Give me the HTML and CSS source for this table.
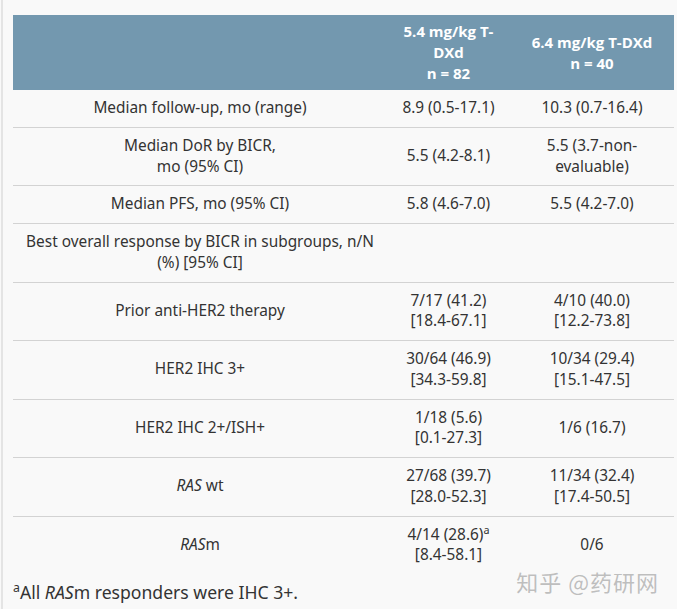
FILE: index.html
```html
<!DOCTYPE html>
<html>
<head>
<meta charset="utf-8">
<link rel="stylesheet" href="styles.css">
</head>
<body>
<div class="page">
  <table class="data">
    <colgroup>
      <col class="c1"><col class="c2"><col class="c3">
    </colgroup>
    <thead>
      <tr>
        <th></th>
        <th>5.4 mg/kg T-DXd<br>n = 82</th>
        <th>6.4 mg/kg T-DXd<br>n = 40</th>
      </tr>
    </thead>
    <tbody>
      <tr><td>Median follow-up, mo (range)</td><td>8.9 (0.5-17.1)</td><td>10.3 (0.7-16.4)</td></tr>
      <tr><td>Median DoR by BICR,<br>mo (95% CI)</td><td>5.5 (4.2-8.1)</td><td>5.5 (3.7-non-evaluable)</td></tr>
      <tr><td>Median PFS, mo (95% CI)</td><td>5.8 (4.6-7.0)</td><td>5.5 (4.2-7.0)</td></tr>
      <tr><td>Best overall response by BICR in subgroups, n/N (%) [95% CI]</td><td></td><td></td></tr>
      <tr><td>Prior anti-HER2 therapy</td><td>7/17 (41.2)<br>[18.4-67.1]</td><td>4/10 (40.0)<br>[12.2-73.8]</td></tr>
      <tr><td>HER2 IHC 3+</td><td>30/64 (46.9)<br>[34.3-59.8]</td><td>10/34 (29.4)<br>[15.1-47.5]</td></tr>
      <tr><td>HER2 IHC 2+/ISH+</td><td>1/18 (5.6)<br>[0.1-27.3]</td><td>1/6 (16.7)</td></tr>
      <tr><td><i>RAS</i> wt</td><td>27/68 (39.7)<br>[28.0-52.3]</td><td>11/34 (32.4)<br>[17.4-50.5]</td></tr>
      <tr class="last"><td><i>RAS</i>m</td><td>4/14 (28.6)<sup>a</sup><br>[8.4-58.1]</td><td>0/6</td></tr>
    </tbody>
  </table>
  <p class="note"><sup>a</sup>All <i>RAS</i>m responders were IHC 3+.</p>
  <div class="watermark">知乎 @药研网</div>
</div>
</body>
</html>
```

FILE: styles.css
```css
html, body {
  margin: 0;
  padding: 0;
  background: #f9f9f9;
}
.page {
  position: relative;
  margin-left: 1px;
  border-left: 2px solid #e4e4e4;
  padding: 15px 3px 0 10px;
  height: 594px;
  font-family: "Noto Sans", "Open Sans", sans-serif;
  color: #333;
}
.data {
  width: 661px;
  border-collapse: collapse;
  table-layout: fixed;
  font-size: 15.4px;
  line-height: 20.75px;
}
.c1 { width: 374px; }
.c2 { width: 123px; }
.c3 { width: 164px; }
.data th {
  background: #7398af;
  color: #fff;
  font-family: "Open Sans", "Noto Sans", sans-serif;
  font-size: 15px;
  line-height: 21px;
  font-weight: 700;
  padding: 6px 10px 6px;
  text-align: center;
  vertical-align: middle;
}
.data td {
  padding: 8px 8px;
  text-align: center;
  vertical-align: middle;
  border-bottom: 1px solid #d3d3d3;
}
.data tr.last td { border-bottom: none; }
.data sup, .note sup {
  font-size: 0.7em;
  line-height: 0;
  vertical-align: 0.55em;
}
.note {
  margin: 7px 0 0 0;
  font-size: 17.6px;
  line-height: 22px;
}
.watermark {
  position: absolute;
  right: 18px;
  bottom: 12px;
  font-family: "Noto Sans CJK SC", sans-serif;
  font-size: 22px;
  color: rgba(150, 150, 150, 0.6);
  letter-spacing: 1px;
}
```
